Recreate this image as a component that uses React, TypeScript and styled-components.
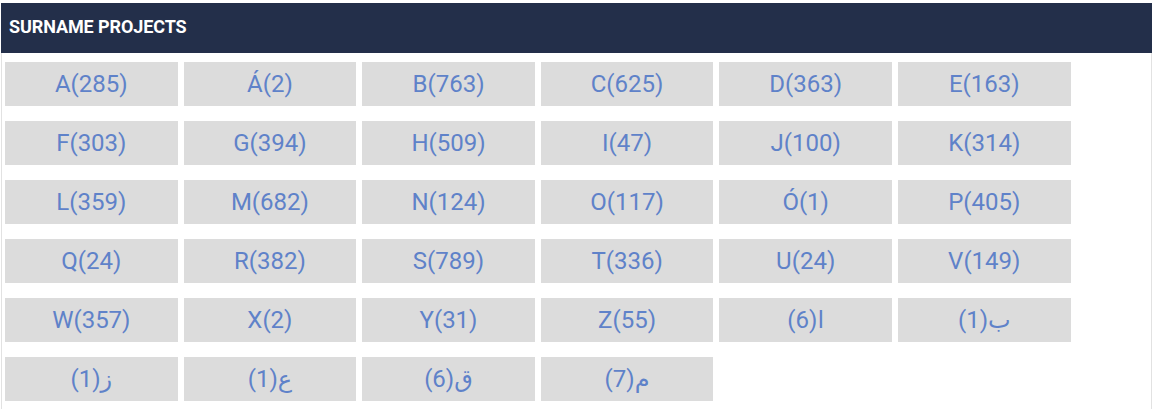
import styled, { createGlobalStyle } from "styled-components";

const letters: [string, number][] = [
    ["A", 285], ["Á", 2], ["B", 763], ["C", 625], ["D", 363], ["E", 163],
    ["F", 303], ["G", 394], ["H", 509], ["I", 47], ["J", 100], ["K", 314],
    ["L", 359], ["M", 682], ["N", 124], ["O", 117], ["Ó", 1], ["P", 405],
    ["Q", 24], ["R", 382], ["S", 789], ["T", 336], ["U", 24], ["V", 149],
    ["W", 357], ["X", 2], ["Y", 31], ["Z", 55], ["ا", 6], ["ب", 1],
    ["ز", 1], ["ع", 1], ["ق", 6], ["م", 7],
];

export default function App() {
    return (
        <>
            <GlobalStyle />
            <Panel>
                <Header>SURNAME PROJECTS</Header>
                <Body>
                    <Grid>
                        {letters.map(([letter, count]) => (
                            <Cell key={letter} href="#">
                                {letter}({count})
                            </Cell>
                        ))}
                    </Grid>
                </Body>
            </Panel>
        </>
    );
}

const GlobalStyle = createGlobalStyle`
    body {
        margin: 0;
        background: #fff;
        font-family: Roboto, "DejaVu Sans", sans-serif;
    }
`;

const Panel = styled.section`
    margin: 3px 0 0 1px;
    width: 1151px;
`;

const Header = styled.h2`
    margin: 0;
    height: 50px;
    box-sizing: border-box;
    display: flex;
    align-items: center;
    padding: 0 0 4px 8px;
    background: #232f4a;
    color: #fff;
    font-size: 18px;
    font-weight: 700;
    letter-spacing: -0.1px;
`;

const Body = styled.div`
    border-left: 1px solid #e2e2e2;
    border-right: 1px solid #e2e2e2;
    padding: 9px 0 8px 3px;
`;

const Grid = styled.div`
    display: grid;
    grid-template-columns: repeat(6, 172.6px);
    column-gap: 6px;
    row-gap: 15px;
`;

const Cell = styled.a`
    display: flex;
    align-items: center;
    justify-content: center;
    height: 44px;
    background: #dcdcdc;
    color: #5f82c9;
    font-size: 24px;
    text-decoration: none;
`;
